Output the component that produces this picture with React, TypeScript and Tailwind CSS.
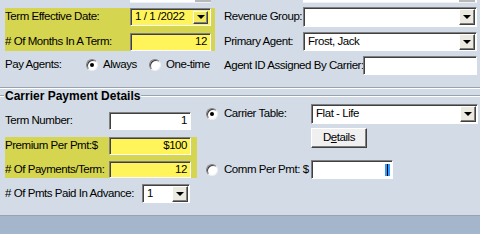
import React from "react";

const sunken =
  "border border-t-[#808080] border-l-[#808080] border-b-white border-r-white shadow-[inset_1px_1px_0_#404040]";

function DropButton({ className = "" }: { className?: string }) {
  return (
    <div
      className={`w-[16px] h-[16px] bg-[#ece9e1] border border-t-white border-l-white border-b-[#404040] border-r-[#404040] shadow-[inset_-1px_-1px_0_#808080] flex items-center justify-center ${className}`}
    >
      <div className="w-0 h-0 border-l-[4px] border-r-[4px] border-t-[4px] border-l-transparent border-r-transparent border-t-black" />
    </div>
  );
}

function Field({ w, value, yellow, right }: { w: string; value?: string; yellow?: boolean; right?: boolean }) {
  return (
    <div
      className={`${w} h-full ${sunken} ${yellow ? "bg-[#fff55b]" : "bg-white"} flex items-center px-[3px] ${right ? "justify-end" : ""}`}
    >
      {value}
    </div>
  );
}

function Combo({ w, value, yellow }: { w: string; value?: string; yellow?: boolean }) {
  return (
    <div className={`${w} h-full ${sunken} ${yellow ? "bg-[#fff55b]" : "bg-white"} flex items-center pl-[4px] pr-[1px]`}>
      <span className="flex-1 truncate">{value}</span>
      <DropButton />
    </div>
  );
}

function Radio({ checked }: { checked?: boolean }) {
  return (
    <div className="shrink-0 w-[12px] h-[12px] rounded-full bg-white border border-t-[#808080] border-l-[#808080] border-b-[#f0f0f0] border-r-[#f0f0f0] shadow-[inset_1px_1px_0_#404040] flex items-center justify-center">
      {checked && <div className="w-[4px] h-[4px] rounded-full bg-black" />}
    </div>
  );
}

export default function App() {
  return (
    <div className="w-[480px] h-[234px] overflow-hidden bg-[#d3dce6] flex flex-col font-['Liberation_Sans',Arial,sans-serif] text-[11.5px] tracking-[-0.45px] whitespace-nowrap text-black leading-none">
      {/* Top section */}
      <div className="h-[87px] grid grid-cols-[219px_1fr]">
        <div className="flex flex-col">
          <div className="ml-[130px] w-[81px] h-[3px] bg-white border-b border-b-[#eef2f6] flex justify-end">
            <div className="w-[16px] h-full bg-[#b8b8b8]" />
          </div>
          <div className="mt-[5px] ml-[5px] w-[210px] h-[43px] bg-[#d5d54f] flex flex-col gap-[7px]">
            <div className="h-[18px] flex items-center">
              <span className="w-[125px]">Term Effective Date:</span>
              <div className={`w-[81px] h-full ${sunken} bg-[#fff55b] flex items-center pl-[4px] pr-[2px]`}>
                <span className="flex-1">1 / 1 /2022</span>
                <DropButton className="!h-[13px] !w-[15px] !bg-[#f2ea5a]" />
              </div>
            </div>
            <div className="h-[18px] flex items-center">
              <span className="w-[125px]"># Of Months In A Term:</span>
              <Field w="w-[81px]" value="12" yellow right />
            </div>
          </div>
          <div className="mt-[6px] ml-[5px] h-[16px] flex items-center">
            <span className="w-[81px]">Pay Agents:</span>
            <div className="w-[63px] flex items-center gap-[5px]">
              <Radio checked />
              <span>Always</span>
            </div>
            <div className="flex items-center gap-[5px]">
              <Radio />
              <span>One-time</span>
            </div>
          </div>
        </div>

        <div className="flex flex-col pl-[5px]">
          <div className="ml-[79px] w-[174px] h-[3px] bg-white border-b border-b-[#eef2f6] flex justify-end pr-[2px]">
            <div className="w-[16px] h-full bg-[#b8b8b8]" />
          </div>
          <div className="mt-[4px] h-[20px] flex items-center">
            <span className="w-[79px]">Revenue Group:</span>
            <Combo w="w-[174px]" />
          </div>
          <div className="mt-[5px] h-[19px] flex items-center">
            <span className="w-[79px]">Primary Agent:</span>
            <Combo w="w-[174px]" value="Frost, Jack" />
          </div>
          <div className="mt-[5px] h-[19px] flex items-center">
            <span className="w-[139px]">Agent ID Assigned By Carrier:</span>
            <Field w="w-[114px]" />
          </div>
        </div>
      </div>

      <div className="h-[2px] border-t border-t-[#9aa3ad] border-b border-b-white" />

      {/* Group title */}
      <div className="h-[13px] flex items-center">
        <div className="w-[4px] h-[2px] border-t border-t-[#9aa3ad] border-b border-b-white" />
        <span className="px-[1px] font-bold text-[12px] tracking-normal">Carrier Payment Details</span>
        <div className="flex-1 h-[2px] border-t border-t-[#9aa3ad] border-b border-b-white" />
      </div>

      {/* Lower section */}
      <div className="flex-1 grid grid-cols-[206px_1fr]">
        <div className="flex flex-col pl-[5px]">
          <div className="mt-[10px] h-[18px] flex items-center">
            <span className="w-[104px]">Term Number:</span>
            <Field w="w-[82px]" value="1" right />
          </div>
          <div className="mt-[7px] w-[192px] h-[41px] bg-[#d5d54f] flex flex-col gap-[6px]">
            <div className="h-[18px] flex items-center">
              <span className="w-[104px]">Premium Per Pmt:$</span>
              <Field w="w-[82px]" value="$100" yellow right />
            </div>
            <div className="h-[17px] flex items-center">
              <span className="w-[104px]"># Of Payments/Term:</span>
              <Field w="w-[82px]" value="12" yellow right />
            </div>
          </div>
          <div className="mt-[6px] h-[19px] flex items-center">
            <span className="w-[137px]"># Of Pmts Paid In Advance:</span>
            <Combo w="w-[48px]" value="1" />
          </div>
        </div>

        <div className="flex flex-col">
          <div className="mt-[2px] h-[20px] flex items-center">
            <div className="w-[105px] flex items-center gap-[6px]">
              <Radio checked />
              <span>Carrier Table:</span>
            </div>
            <Combo w="w-[167px]" value="Flat - Life" />
          </div>
          <div className="mt-[4px] ml-[105px] w-[56px] h-[20px] bg-[#f0f0f0] border border-t-white border-l-white border-b-[#404040] border-r-[#404040] shadow-[inset_-1px_-1px_0_#808080] flex items-center justify-center">
            <span>
              D<span className="underline">e</span>tails
            </span>
          </div>
          <div className="mt-[12px] h-[19px] flex items-center">
            <div className="w-[105px] flex items-center gap-[6px]">
              <Radio />
              <span>Comm Per Pmt: $</span>
            </div>
            <div className={`w-[82px] h-full ${sunken} bg-white flex items-center justify-end pr-[2px]`}>
              <div className="w-[5px] h-[12px] bg-[#3399ff] flex justify-center">
                <div className="w-[1px] h-full bg-black" />
              </div>
            </div>
          </div>
        </div>
      </div>

      <div className="h-[19px] border-t border-t-[#9aa3ad] bg-[#a4b6cc]" />
    </div>
  );
}
